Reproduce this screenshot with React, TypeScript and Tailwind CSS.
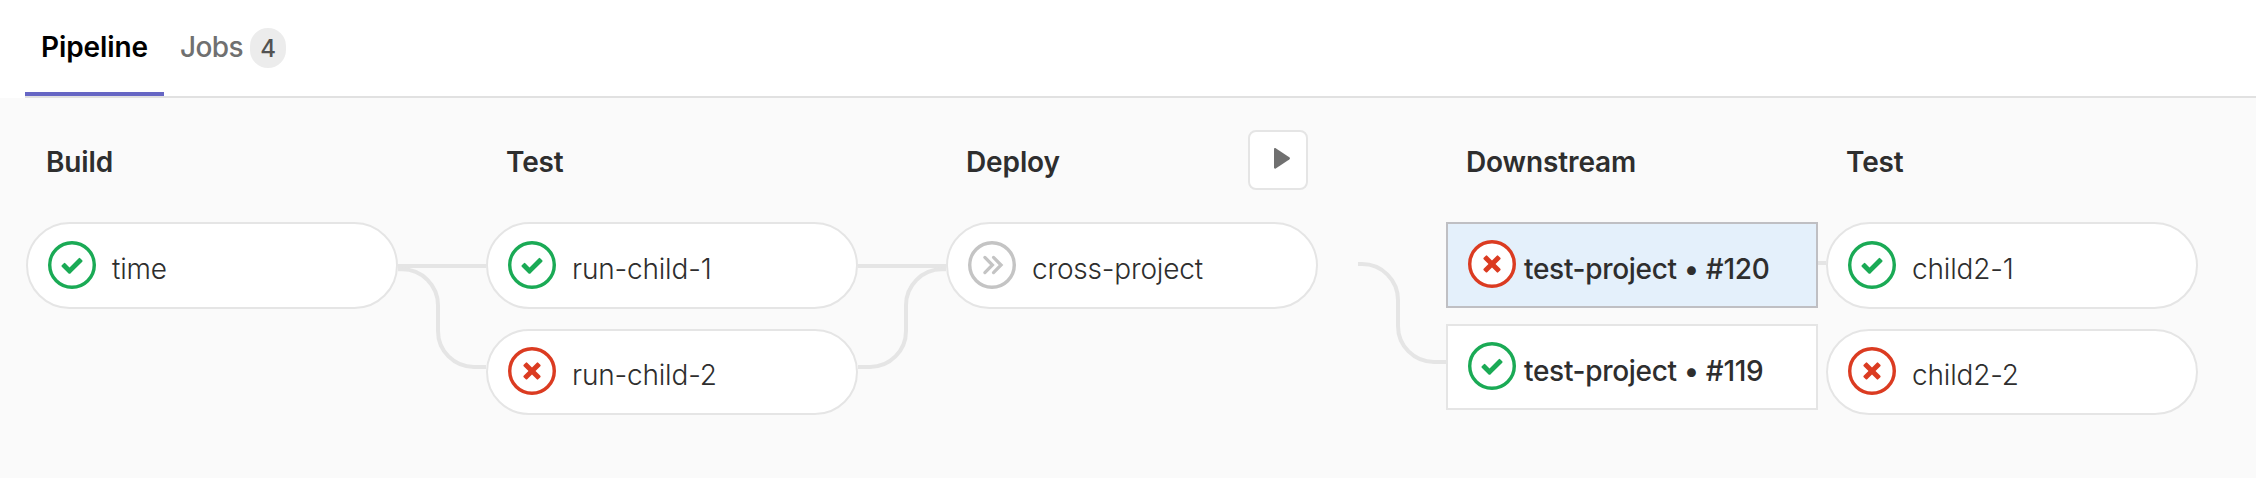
import type { ReactNode } from "react";

type Status = "success" | "failed" | "skipped";

const ringColors: Record<Status, string> = {
  success: "text-[#1aaa55]",
  failed: "text-[#db3b21]",
  skipped: "text-[#c4c4c4]",
};

function StatusIcon({ status }: { status: Status }) {
  return (
    <svg viewBox="0 0 14 14" className={`size-12 shrink-0 ${ringColors[status]}`}>
      <circle cx="7" cy="7" r="6.5" fill="#fff" stroke="currentColor" />
      {status === "success" && (
        <path
          fill="currentColor"
          d="M6.278 7.697L5.045 6.464a.296.296 0 0 0-.42-.002l-.613.614a.298.298 0 0 0 .002.42l1.91 1.909a.5.5 0 0 0 .703.005l.265-.265L9.997 6.04a.291.291 0 0 0-.009-.408l-.614-.614a.29.29 0 0 0-.408-.009L6.278 7.697z"
        />
      )}
      {status === "failed" && (
        <path
          fill="currentColor"
          d="M7 5.969L5.599 4.568a.29.29 0 0 0-.413.004l-.614.614a.294.294 0 0 0-.004.413L5.968 7l-1.4 1.401a.29.29 0 0 0 .004.413l.614.614c.113.114.3.117.413.004L7 8.032l1.401 1.4a.29.29 0 0 0 .413-.004l.614-.614a.294.294 0 0 0 .004-.413L8.032 7l1.4-1.401a.29.29 0 0 0-.004-.413l-.614-.614a.294.294 0 0 0-.413-.004L7 5.968z"
        />
      )}
      {status === "skipped" && (
        <path
          fill="none"
          stroke="currentColor"
          strokeWidth="0.95"
          strokeLinecap="round"
          d="M4.92 4.8 7.12 7l-2.2 2.2M7.44 4.8 9.64 7l-2.2 2.2"
        />
      )}
    </svg>
  );
}

function Column({ title, action, children }: { title: string; action?: ReactNode; children: ReactNode }) {
  return (
    <section className="w-[372px] shrink-0">
      <header className="mb-8 flex h-15 items-center justify-between pr-2.5 pl-5">
        <h2 className="pt-1 text-[28px] leading-9 font-semibold tracking-[-0.12px]">{title}</h2>
        {action}
      </header>
      {children}
    </section>
  );
}

function Jobs({ jobs }: { jobs: { name: string; status: Status }[] }) {
  return (
    <ul className="flex flex-col gap-5">
      {jobs.map((job) => (
        <li
          key={job.name}
          className="flex h-[86px] items-start rounded-full border-2 border-[#e5e5e5] bg-white pt-4 pl-5 first:h-[87px] first:pt-[17px]"
        >
          <StatusIcon status={job.status} />
          <span className="ml-4 pt-2 text-[28px] leading-10 font-light tracking-[-0.18px]">{job.name}</span>
        </li>
      ))}
    </ul>
  );
}

function LinkedPipeline({ label, status, active }: { label: string; status: Status; active?: boolean }) {
  return (
    <li
      className={`flex h-[86px] items-start border-2 pt-4 pl-5 ${
        active ? "border-[#bfbfc3] bg-[#e4f0fb]" : "border-[#e5e5e5] bg-white"
      }`}
    >
      <StatusIcon status={status} />
      <span className="ml-2 pt-[9px] text-[28px] leading-10 font-medium tracking-[-0.3px]">{label}</span>
    </li>
  );
}

function Connector({ paths, className }: { paths: string[]; className: string }) {
  return (
    <svg className={`mt-[92px] h-[194px] shrink-0 ${className}`} fill="none" stroke="#e5e5e5" strokeWidth="4">
      {paths.map((d) => (
        <path key={d} d={d} />
      ))}
    </svg>
  );
}

export default function App() {
  return (
    <main className="flex h-[478px] w-[2256px] flex-col overflow-hidden bg-[#fafafa] font-['Inter',sans-serif] text-[#2e2e2e]">
      <div className="h-[98px] shrink-0 bg-white pl-[25px]">
        <nav className="flex h-full items-stretch border-b-2 border-[#e1e1e1] text-[28px] leading-9">
          <a className="flex w-[139px] justify-center border-b-4 border-[#6666c4] pt-[29px] font-semibold tracking-[-0.1px] text-black">
            Pipeline
          </a>
          <a className="flex items-start pt-7 pl-4 text-[#707070]">
            <span className="w-[63px] pt-px font-medium tracking-[-0.6px]">Jobs</span>
            <span className="ml-[7px] flex h-10 w-9 items-center justify-center rounded-full bg-[#ececec] pt-0.5 text-2xl font-medium text-[#525252]">
              4
            </span>
          </a>
        </nav>
      </div>

      <div className="flex items-start pt-8 pl-[26px]">
        <Column title="Build">
          <Jobs jobs={[{ name: "time", status: "success" }]} />
        </Column>
        <Connector
          className="w-[88px]"
          paths={["M0 44H88", "M0 47.3H4a36 36 0 0 1 36 36V109a36 36 0 0 0 36 36H88"]}
        />
        <Column title="Test">
          <Jobs
            jobs={[
              { name: "run-child-1", status: "success" },
              { name: "run-child-2", status: "failed" },
            ]}
          />
        </Column>
        <Connector
          className="w-[88px]"
          paths={["M0 44H88", "M0 145H12a36 36 0 0 0 36-36V83.3a36 36 0 0 1 36-36H88"]}
        />
        <Column
          title="Deploy"
          action={
            <button className="flex size-15 items-center justify-center rounded-lg border-2 border-[#e5e5e5] bg-white">
              <svg viewBox="0 0 16 21" className="mb-1 ml-2 h-[21px] w-4" fill="#707070">
                <path d="M0 1.2C0 .2.9-.3 1.7.2L15.3 9.2c.9.6.9 1.7 0 2.3L1.7 20.5C.9 21 0 20.5 0 19.5z" />
              </svg>
            </button>
          }
        >
          <Jobs jobs={[{ name: "cross-project", status: "skipped" }]} />
        </Column>
        <Connector className="ml-10 w-[88px]" paths={["M0 42H4a36 36 0 0 1 36 36V104a36 36 0 0 0 36 36H88"]} />
        <Column title="Downstream">
          <ul className="flex flex-col gap-4">
            <LinkedPipeline label="test-project • #120" status="failed" active />
            <LinkedPipeline label="test-project • #119" status="success" />
          </ul>
        </Column>
        <Connector className="w-2" paths={["M0 41H8"]} />
        <Column title="Test">
          <Jobs
            jobs={[
              { name: "child2-1", status: "success" },
              { name: "child2-2", status: "failed" },
            ]}
          />
        </Column>
      </div>
    </main>
  );
}
